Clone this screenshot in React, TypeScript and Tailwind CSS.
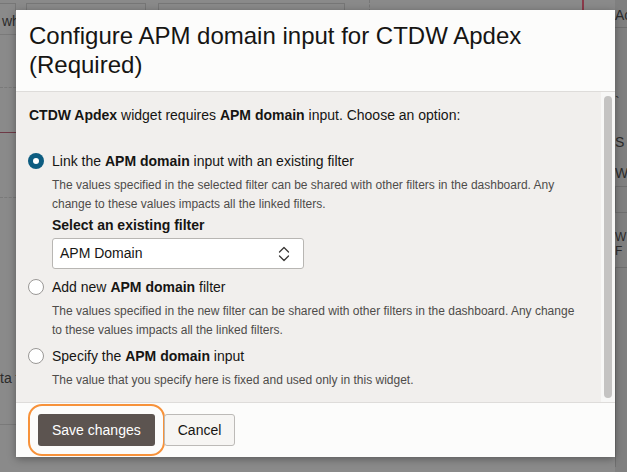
import React from 'react'

function Radio({ checked }: { checked?: boolean }) {
  if (checked) {
    return (
      <span className="mt-[1px] flex h-4 w-4 shrink-0 items-center justify-center rounded-full bg-[#0d5c80]">
        <span className="h-[6px] w-[6px] rounded-full bg-white" />
      </span>
    )
  }
  return <span className="mt-[1px] h-4 w-4 shrink-0 rounded-full border border-[#9a9896] bg-white" />
}

function Option({
  checked,
  label,
  desc,
  className = '',
  children,
}: {
  checked?: boolean
  label: React.ReactNode
  desc: React.ReactNode
  className?: string
  children?: React.ReactNode
}) {
  return (
    <div className={`flex gap-[8px] ${className}`}>
      <Radio checked={checked} />
      <div className="flex-1">
        <div className="text-[14px] leading-[18px] text-[#161513]">{label}</div>
        <p className="mt-[6px] pr-[6px] text-[12px] leading-[19px] text-[#4e4c4a]">{desc}</p>
        {children}
      </div>
    </div>
  )
}

function UpDown() {
  return (
    <svg width="12" height="16" viewBox="0 0 12 16" fill="none" stroke="#3a3836" strokeWidth="1.3" strokeLinecap="round" strokeLinejoin="round">
      <path d="M1.5 6 L6 1.5 L10.5 6" />
      <path d="M1.5 10 L6 14.5 L10.5 10" />
    </svg>
  )
}

export default function App() {
  return (
    <div
      className="relative h-[472px] w-[627px] overflow-hidden bg-[#8a8a8a]"
      style={{ fontFamily: '"Liberation Sans", Arial, sans-serif' }}
    >
      {/* dimmed dashboard behind the dialog */}
      <div className="flex h-full">
        <div className="relative w-[16px] shrink-0 overflow-hidden whitespace-nowrap text-[14px] text-[#2c2c2c]">
          <div className="mt-[3px] h-[8px] border-t border-r border-[#777]" />
          <div className="mt-[2px] pl-[2px] leading-[16px]">wh</div>
          <div className="mt-[5px] border-t border-[#7a7a7a]" />
          <div className="mt-[52px] border-t border-dashed border-[#7a7a7a]" />
          <div className="mt-[44px] border-t border-[#6e3a46]" />
          <div className="mt-[64px] border-t border-dashed border-[#7a7a7a]" />
          <div className="mt-[172px] leading-[16px]">ta f</div>
          <div className="mt-[38px] border-t border-[#7a7a7a]" />
        </div>
        <div className="flex-1">
          <div className="flex h-[12px] items-end gap-[12px] pl-[10px]">
            <div className="h-[9px] w-[120px] border-x border-t border-[#777]" />
            <div className="h-[9px] w-[187px] border-x border-t border-[#777]" />
            <div className="ml-[12px] h-[12px] border-l border-dashed border-[#777]" />
            <div className="ml-[200px] h-[12px] border-l-2 border-[#8a3a4a]" />
          </div>
        </div>
        <div className="w-[12px] shrink-0 overflow-hidden whitespace-nowrap bg-[#808080] text-[14px] text-[#2c2c2c]">
          <div className="pt-[7px] leading-[16px]">Ac</div>
          <div className="mt-[4px] border-t border-[#6f6f6f]" />
          <div className="mt-[66px] leading-[16px]">`</div>
          <div className="mt-[24px] leading-[16px]">S</div>
          <div className="mt-[15px] leading-[16px]">W</div>
          <div className="mt-[5px] h-[27px] border border-r-0 border-[#6f6f6f]" />
          <div className="mt-[17px] text-[12px] leading-[14px]">W<br />F</div>
          <div className="mt-[9px] h-[200px] border-l border-t border-[#6f6f6f]" />
        </div>
      </div>

      {/* dialog */}
      <div className="absolute left-[16px] top-[10px] flex h-[447px] w-[599px] flex-col bg-[#fcfcfb] shadow-[0_2px_8px_rgba(0,0,0,0.35)]">
        <div className="h-[82px] shrink-0 border-b border-[#dedcda] px-[13px] pt-[11px]">
          <h1 className="text-[24px] leading-[29px] text-[#161513]">
            Configure APM domain input for CTDW Apdex (Required)
          </h1>
        </div>

        <div className="flex min-h-0 flex-1 bg-[#f1efed]">
          <div className="flex-1 pl-[12px] pr-[10px] pt-[14px]">
            <p className="pl-[1px] text-[14px] leading-[18px] text-[#161513]">
              <b className="font-semibold">CTDW Apdex</b> widget requires <b className="font-semibold">APM domain</b> input.
              Choose an option:
            </p>
            <div className="mt-[28px] flex flex-col gap-[7px]">
              <Option
                checked
                label={
                  <>
                    Link the <b className="font-semibold">APM domain</b> input with an existing filter
                  </>
                }
                desc="The values specified in the selected filter can be shared with other filters in the dashboard. Any change to these values impacts all the linked filters."
              >
                <div className="mt-[2px] text-[14px] font-bold leading-[18px] text-[#161513]">Select an existing filter</div>
                <div className="mt-[4px] flex h-[31px] w-[252px] items-center justify-between rounded-[3px] border border-[#b8b6b3] bg-white pl-[7px] pr-[13px] text-[14px] text-[#161513]">
                  <span>APM Domain</span>
                  <UpDown />
                </div>
              </Option>
              <Option
                className="mt-[2px]"
                label={
                  <>
                    Add new <b className="font-semibold">APM domain</b> filter
                  </>
                }
                desc="The values specified in the new filter can be shared with other filters in the dashboard. Any change to these values impacts all the linked filters."
              />
              <Option
                label={
                  <>
                    Specify the <b className="font-semibold">APM domain</b> input
                  </>
                }
                desc="The value that you specify here is fixed and used only in this widget."
              />
            </div>
          </div>
          <div className="w-[14px] shrink-0 bg-[#f7f7f6] px-[3px] py-[4px]">
            <div className="h-full rounded-full bg-[#c4c3c2]" />
          </div>
        </div>

        <div className="flex h-[55px] shrink-0 items-center gap-[10px] border-t border-[#dedcda] pl-[12px]">
          <div className="rounded-[14px] border-[2.5px] border-[#f7923a] p-[8px]">
            <button className="h-[32px] rounded-[3px] bg-[#5c5450] px-[14px] text-[14px] text-white">Save changes</button>
          </div>
          <button className="-ml-[11px] h-[32px] rounded-[3px] border border-[#bcbab7] bg-[#f6f5f3] px-[13px] text-[14px] text-[#161513]">
            Cancel
          </button>
        </div>
      </div>
    </div>
  )
}
